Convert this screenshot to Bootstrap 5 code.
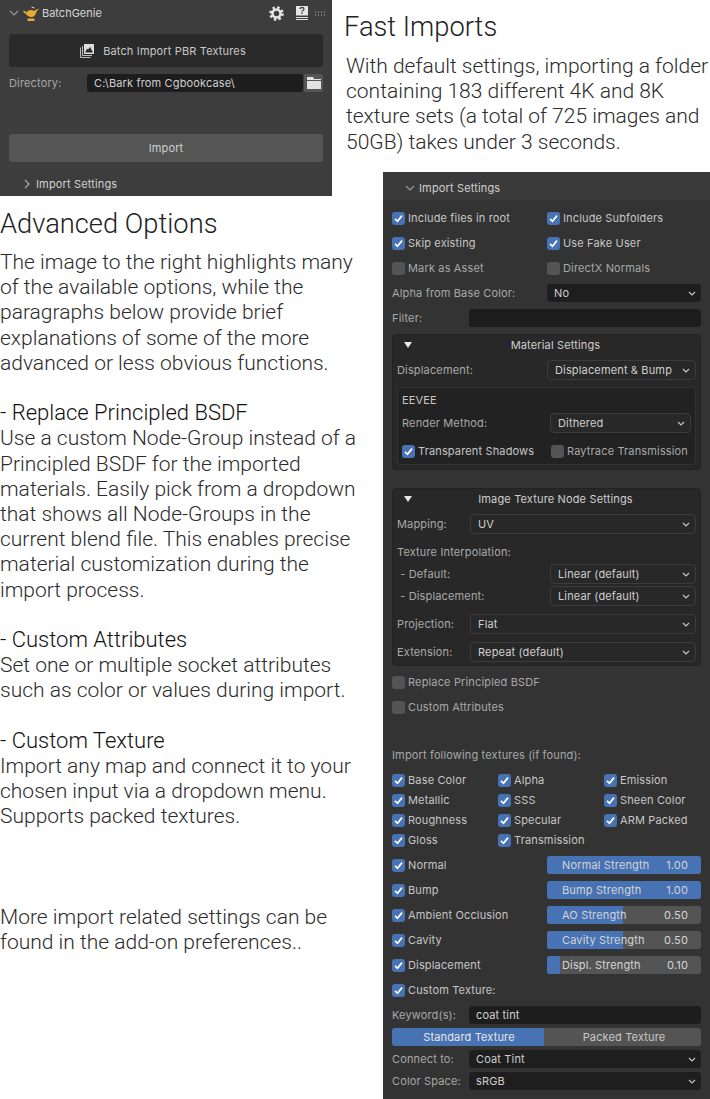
<!DOCTYPE html>
<html lang="en">
<head>
  <meta charset="UTF-8">
  <meta name="viewport" content="width=device-width, initial-scale=1.0">
  <title>BatchGenie</title>
  <link href="https://cdn.jsdelivr.net/npm/bootstrap@5.3.0/dist/css/bootstrap.min.css" rel="stylesheet">
  <style>
    body { background: #fff; margin: 0; overflow: hidden; }
    .page-grid { display: grid; grid-template-columns: 332px 12px 39px 327px; grid-template-rows: 172px 24px auto; width: 710px; height: 1099px; }
    .top-panel { grid-column: 1; grid-row: 1 / 3; background: #3d3d3d; padding: 0 9px; }
    .fast-text { grid-column: 3 / 5; grid-row: 1; padding-top: 11px; margin-right: -4px; }
    .adv-text { grid-column: 1 / 4; grid-row: 3; padding-top: 12px; }
    .settings { grid-column: 4; grid-row: 2 / 4; background: #333; height: 927px; overflow: hidden; }

    .txt-h { font: 300 27.3px/32px Roboto, sans-serif; color: #222; margin: 0; white-space: nowrap; }
    .txt-b { font: 300 21px/25.2px Roboto, sans-serif; color: #2b2b2b; margin: 0 0 25.2px; white-space: nowrap; }
    .txt-b b { font-weight: 300; font-size: 22px; line-height: 0; color: #111; }
    .fast-text .txt-b { margin: 11px 0 0 2px; }
    .adv-text .txt-b.first { margin-top: 10px; }

    .ui, .ui .form-select, .ui .form-control, .ui .btn { font: 400 11px/14px Inter, sans-serif; letter-spacing: .15px; }
    .ui { color: #c6c6c6; }
    .lbl { color: #a8a8a8; white-space: nowrap; }

    .head-top { height: 28px; color: #d0d0d0; }
    .big-btn { height: 33px; width: 314px; background: #2a2a2a; border: 0; border-radius: 3px; color: #c8c8c8; display: flex; align-items: center; justify-content: center; gap: 9px; margin-top: 6px; padding: 0 6px 0 0; }
    .imp-btn { height: 28px; width: 314px; background: #555; border: 0; border-radius: 3px; color: #d0d0d0; margin-top: 42px; display: block; }

    .ui .form-control { background: #1d1d1d; border: 0; border-radius: 3px; color: #d0d0d0; height: 18px; min-height: 0; padding: 0 7px; box-shadow: none; }
    .ui .form-select { background-color: #282828; border: 1px solid #3c3c3c; border-radius: 4px; color: #cfcfcf; height: 20px; min-height: 0; padding: 0 16px 0 7px;
      background-image: url("data:image/svg+xml,%3csvg xmlns='http://www.w3.org/2000/svg' viewBox='0 0 8 5'%3e%3cpath fill='none' stroke='%23c8c8c8' stroke-width='1.1' d='M1 1l3 3 3-3'/%3e%3c/svg%3e");
      background-size: 8px 5px; background-position: right 5px center; box-shadow: none; }
    .ui .sel-dark { background-color: #1e1e1e; border: 0; height: 18px; }

    .ui .form-check { display: flex; align-items: center; gap: 3px; min-height: 0; margin: 0; padding: 0; white-space: nowrap; }
    .ui .form-check-input { float: none; flex: none; width: 13px; height: 13px; margin: 0; background-color: #545454; border: 0; border-radius: 3px; box-shadow: none; }
    .ui .form-check-input:checked { background-color: #4772b3;
      background-image: url("data:image/svg+xml,%3csvg xmlns='http://www.w3.org/2000/svg' viewBox='0 0 13 13'%3e%3cpath fill='none' stroke='%23fff' stroke-width='1.7' d='M3 6.8l2.5 2.5L10 3.6'/%3e%3c/svg%3e");
      background-size: 13px 13px; }
    .ui .form-check-label { color: #c6c6c6; }
    .ui .form-check-input:not(:checked) + .form-check-label { color: #a8a8a8; }

    .set-head { height: 28px; background: #3a3a3a; padding: 4px 0 0 22px; gap: 4px; color: #d0d0d0; }
    .set-body { padding: 9px 9px 0; }
    .r-line { display: flex; align-items: center; height: 18px; margin-bottom: 7px; }
    .c-half { width: 155px; flex: none; }
    .r-line .form-select, .r-line .form-control { flex: 1 1 0; width: auto; }

    .mat-box { background: #282828; border: 1px solid #222; border-radius: 4px; padding: 0 4px; margin-bottom: 18px; }
    .box-title { position: relative; height: 21px; padding-left: 18px; text-align: center; color: #cfcfcf; line-height: 21px; }
    .tri { position: absolute; left: 7px; top: 7px; width: 0; height: 0; border-left: 4.5px solid transparent; border-right: 4.5px solid transparent; border-top: 6px solid #e8e8e8; }
    .eevee { background: #222; border: 1px solid #333; border-radius: 4px; padding: 5px 4px 0; height: 78px; margin-top: 7px; }
    .sel-row { display: flex; align-items: center; height: 20px; }
    .sel-row .form-select { flex: 1 1 0; width: auto; }

    .tex-grid { display: grid; grid-template-columns: 106px 106px 1fr; row-gap: 6px; }
    .tex-grid .form-check { height: 14px; }
    .bar-track { height: 18px; width: 154px; flex: none; background: #545454; border-radius: 3px; position: relative; font-size: 11px; }
    .ui .bar-track .progress-bar { background: #4772b3; height: 18px; }
    .bar-txt { position: absolute; left: 15px; right: 13px; top: 0; line-height: 18px; display: flex; justify-content: space-between; color: #d4d4d4; }
    .seg .btn { height: 18px; padding: 0; border: 0; color: #c8c8c8; background: #545454; border-radius: 3px; flex: 1 1 0; }
    .seg .btn.on { background: #4772b3; color: #e6e6e6; flex: none; width: 153px; padding-left: 1px; }
    .seg .btn:not(:first-child) { margin-left: 1px; padding-left: 3px; }
  </style>
</head>
<body>
  <div class="page-grid">

    <div class="top-panel ui">
      <div class="head-top d-flex align-items-center" style="padding-bottom:2px">
        <svg width="10" height="6" viewBox="0 0 10 6" style="margin-right:4px"><path d="M1 1l4 4 4-4" fill="none" stroke="#999" stroke-width="1.2"/></svg>
        <svg width="16" height="15" viewBox="0 0 16 15"><path d="M0 5c2.500-1 2.500 1.500 3.500 1.500C4 5 6 4 8 4s2.500 1 3.500 1c1-1.500 2.500-2 4.500-2.500-1 1.500-2.500 2.500-3 4.500-.7 2.500-2.500 4-4.500 4C6 11 3.500 9.500 3 8 1.500 7.500.8 6.500 0 5zM4.500 12.500h7V15h-7z" fill="#e9a93a"/><path d="M8.500 1l3 1" stroke="#ddd" fill="none"/></svg>
        <span style="margin-left:3px;color:#d4d4d4;letter-spacing:0">BatchGenie</span>
        <span class="ms-auto d-flex align-items-center" style="margin-right:-2px">
          <svg width="15" height="15" viewBox="0 0 15 15" style="margin-right:12px"><circle cx="7.500" cy="7.500" r="6" fill="none" stroke="#e4e4e4" stroke-width="2.600" stroke-dasharray="2.360 2.350"/><circle cx="7.500" cy="7.500" r="4" fill="none" stroke="#e4e4e4" stroke-width="2.600"/></svg>
          <svg width="12" height="14" viewBox="0 0 12 14" style="margin-right:7px"><path fill="#e4e4e4" d="M0 0h12v9.500H0z"/><path fill="none" stroke="#e4e4e4" d="M0 11.500h12M0 13.500h12"/><path fill="none" stroke="#444" stroke-width="1.300" d="M4 3c0-2 4-2 4 0 0 1.500-2 1.500-2 2.700M6 6.500V8"/></svg>
          <svg width="10" height="5" viewBox="0 0 10 5"><path stroke="#bbb" stroke-dasharray="1 2" d="M0 1h10M0 4h10"/></svg>
        </span>
      </div>
      <button class="btn big-btn" type="button">
        <svg width="14" height="14" viewBox="0 0 14 14"><path fill="none" stroke="#bbb" d="M.5 3.500v10h10M2.500 2v9.500h9.500"/><path fill="#ddd" fill-rule="evenodd" d="M4 0h10v10H4zM5 8.500h8L10 3 8.200 5.500 7 4.800z"/></svg>
        <span>Batch Import PBR Textures</span>
      </button>
      <div class="d-flex align-items-center" style="margin-top:7px;height:18px">
        <span class="lbl" style="width:78px">Directory:</span>
        <input class="form-control" style="width:216px" value="C:\Bark from Cgbookcase\">
        <span class="d-flex align-items-center justify-content-center ms-auto" style="width:19px;height:18px;background:#555;border-radius:0 3px 3px 0">
          <svg width="14" height="12" viewBox="0 0 14 12"><path fill="#e2e2e2" d="M0 0h6l1 2h7v1H0zM0 4h14v8H0z"/></svg>
        </span>
      </div>
      <button class="btn imp-btn" type="button">Import</button>
      <div class="d-flex align-items-center" style="margin-top:15px;margin-left:15px;gap:6px;color:#d0d0d0;height:14px">
        <svg width="6" height="10" viewBox="0 0 6 10"><path d="M1 1l4 4-4 4" fill="none" stroke="#aaa" stroke-width="1.200"/></svg>
        <span>Import Settings</span>
      </div>
    </div>

    <div class="fast-text">
      <h2 class="txt-h">Fast Imports</h2>
      <p class="txt-b">With default settings, importing a folder<br>containing 183 different 4K and 8K<br>texture sets (a total of 725 images and<br>50GB) takes under 3 seconds.</p>
    </div>

    <div class="adv-text">
      <h2 class="txt-h">Advanced Options</h2>
      <p class="txt-b first">The image to the right highlights many<br>of the available options, while the<br>paragraphs below provide brief<br>explanations of some of the more<br>advanced or less obvious functions.</p>
      <p class="txt-b"><b>- Replace Principled BSDF</b><br>Use a custom Node-Group instead of a<br>Principled BSDF for the imported<br>materials. Easily pick from a dropdown<br>that shows all Node-Groups in the<br>current blend file. This enables precise<br>material customization during the<br>import process.</p>
      <p class="txt-b"><b>- Custom Attributes</b><br>Set one or multiple socket attributes<br>such as color or values during import.</p>
      <p class="txt-b" style="margin-bottom:75.6px"><b>- Custom Texture</b><br>Import any map and connect it to your<br>chosen input via a dropdown menu.<br>Supports packed textures.</p>
      <p class="txt-b">More import related settings can be<br>found in the add-on preferences..</p>
    </div>

    <div class="settings ui">
      <div class="set-head d-flex align-items-center">
        <svg width="10" height="6" viewBox="0 0 10 6"><path d="M1 1l4 4 4-4" fill="none" stroke="#999" stroke-width="1.200"/></svg>
        <span>Import Settings</span>
      </div>
      <div class="set-body">
        <div class="r-line"><div class="form-check c-half"><input class="form-check-input" type="checkbox" checked><label class="form-check-label">Include files in root</label></div><div class="form-check"><input class="form-check-input" type="checkbox" checked><label class="form-check-label">Include Subfolders</label></div></div>
        <div class="r-line"><div class="form-check c-half"><input class="form-check-input" type="checkbox" checked><label class="form-check-label">Skip existing</label></div><div class="form-check"><input class="form-check-input" type="checkbox" checked><label class="form-check-label">Use Fake User</label></div></div>
        <div class="r-line"><div class="form-check c-half"><input class="form-check-input" type="checkbox"><label class="form-check-label">Mark as Asset</label></div><div class="form-check"><input class="form-check-input" type="checkbox"><label class="form-check-label">DirectX Normals</label></div></div>
        <div class="r-line"><span class="lbl c-half">Alpha from Base Color:</span><select class="form-select sel-dark"><option>No</option></select></div>
        <div class="r-line"><span class="lbl" style="width:77px">Filter:</span><input class="form-control"></div>

        <div class="mat-box" style="height:136px">
          <div class="box-title"><span class="tri"></span>Material Settings</div>
          <div class="sel-row" style="margin-top:4px"><span class="lbl" style="width:150px">Displacement:</span><select class="form-select"><option>Displacement &amp; Bump</option></select></div>
          <div class="eevee">
            <div style="color:#c6c6c6">EEVEE</div>
            <div class="sel-row" style="margin-top:6px"><span class="lbl" style="width:148px">Render Method:</span><select class="form-select"><option>Dithered</option></select></div>
            <div class="d-flex align-items-center" style="margin-top:11px">
              <div class="form-check" style="width:149px"><input class="form-check-input" type="checkbox" checked><label class="form-check-label">Transparent Shadows</label></div>
              <div class="form-check"><input class="form-check-input" type="checkbox"><label class="form-check-label">Raytrace Transmission</label></div>
            </div>
          </div>
        </div>

        <div class="mat-box" style="height:178px;margin-bottom:7px">
          <div class="box-title"><span class="tri"></span>Image Texture Node Settings</div>
          <div class="sel-row" style="margin-top:4px"><span class="lbl" style="width:73px">Mapping:</span><select class="form-select"><option>UV</option></select></div>
          <div class="lbl" style="margin-top:11px;height:14px">Texture Interpolation:</div>
          <div class="sel-row" style="margin-top:5px"><span class="lbl" style="width:153px">&nbsp;- Default:</span><select class="form-select"><option>Linear (default)</option></select></div>
          <div class="sel-row" style="margin-top:2px"><span class="lbl" style="width:153px">&nbsp;- Displacement:</span><select class="form-select"><option>Linear (default)</option></select></div>
          <div class="sel-row" style="margin-top:8px"><span class="lbl" style="width:73px">Projection:</span><select class="form-select"><option>Flat</option></select></div>
          <div class="sel-row" style="margin-top:8px"><span class="lbl" style="width:73px">Extension:</span><select class="form-select"><option>Repeat (default)</option></select></div>
        </div>

        <div class="r-line"><div class="form-check"><input class="form-check-input" type="checkbox"><label class="form-check-label">Replace Principled BSDF</label></div></div>
        <div class="r-line"><div class="form-check"><input class="form-check-input" type="checkbox"><label class="form-check-label">Custom Attributes</label></div></div>
        <div class="lbl" style="margin:32px 0 11px;height:14px">Import following textures (if found):</div>

        <div class="tex-grid" style="margin-bottom:9px">
          <div class="form-check"><input class="form-check-input" type="checkbox" checked><label class="form-check-label">Base Color</label></div>
          <div class="form-check"><input class="form-check-input" type="checkbox" checked><label class="form-check-label">Alpha</label></div>
          <div class="form-check"><input class="form-check-input" type="checkbox" checked><label class="form-check-label">Emission</label></div>
          <div class="form-check"><input class="form-check-input" type="checkbox" checked><label class="form-check-label">Metallic</label></div>
          <div class="form-check"><input class="form-check-input" type="checkbox" checked><label class="form-check-label">SSS</label></div>
          <div class="form-check"><input class="form-check-input" type="checkbox" checked><label class="form-check-label">Sheen Color</label></div>
          <div class="form-check"><input class="form-check-input" type="checkbox" checked><label class="form-check-label">Roughness</label></div>
          <div class="form-check"><input class="form-check-input" type="checkbox" checked><label class="form-check-label">Specular</label></div>
          <div class="form-check"><input class="form-check-input" type="checkbox" checked><label class="form-check-label">ARM Packed</label></div>
          <div class="form-check"><input class="form-check-input" type="checkbox" checked><label class="form-check-label">Gloss</label></div>
          <div class="form-check"><input class="form-check-input" type="checkbox" checked><label class="form-check-label">Transmission</label></div>
        </div>

        <div class="r-line"><div class="form-check c-half"><input class="form-check-input" type="checkbox" checked><label class="form-check-label">Normal</label></div><div class="bar-track progress"><div class="progress-bar" style="width:100%"></div><div class="bar-txt"><span>Normal Strength</span><span>1.00</span></div></div></div>
        <div class="r-line"><div class="form-check c-half"><input class="form-check-input" type="checkbox" checked><label class="form-check-label">Bump</label></div><div class="bar-track progress"><div class="progress-bar" style="width:100%"></div><div class="bar-txt"><span>Bump Strength</span><span>1.00</span></div></div></div>
        <div class="r-line"><div class="form-check c-half"><input class="form-check-input" type="checkbox" checked><label class="form-check-label">Ambient Occlusion</label></div><div class="bar-track progress"><div class="progress-bar" style="width:49.500%"></div><div class="bar-txt"><span>AO Strength</span><span>0.50</span></div></div></div>
        <div class="r-line"><div class="form-check c-half"><input class="form-check-input" type="checkbox" checked><label class="form-check-label">Cavity</label></div><div class="bar-track progress"><div class="progress-bar" style="width:49.500%"></div><div class="bar-txt"><span>Cavity Strength</span><span>0.50</span></div></div></div>
        <div class="r-line"><div class="form-check c-half"><input class="form-check-input" type="checkbox" checked><label class="form-check-label">Displacement</label></div><div class="bar-track progress"><div class="progress-bar" style="width:8.500%"></div><div class="bar-txt"><span>Displ. Strength</span><span>0.10</span></div></div></div>
        <div class="r-line"><div class="form-check"><input class="form-check-input" type="checkbox" checked><label class="form-check-label">Custom Texture:</label></div></div>

        <div class="r-line" style="margin-bottom:4px"><span class="lbl" style="width:77px">Keyword(s):</span><input class="form-control" value="coat tint"></div>
        <div class="btn-group seg d-flex" style="margin-bottom:4px"><button class="btn on" type="button">Standard Texture</button><button class="btn" type="button">Packed Texture</button></div>
        <div class="r-line" style="margin-bottom:4px"><span class="lbl" style="width:77px">Connect to:</span><select class="form-select sel-dark"><option>Coat Tint</option></select></div>
        <div class="r-line"><span class="lbl" style="width:77px">Color Space:</span><select class="form-select sel-dark"><option>sRGB</option></select></div>
      </div>
    </div>
  </div>
  <script src="https://cdn.jsdelivr.net/npm/bootstrap@5.3.0/dist/js/bootstrap.bundle.min.js"></script>
</body>
</html>
